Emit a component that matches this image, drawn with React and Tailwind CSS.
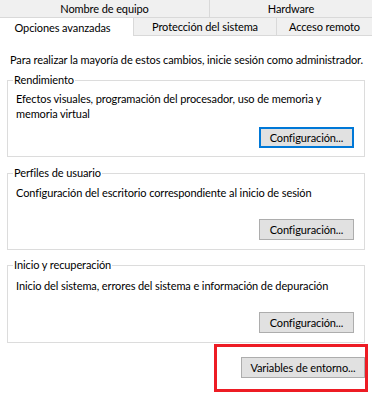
export default function App() {
  const font = { fontFamily: 'Lato, "Liberation Sans", Arial, sans-serif' };

  return (
    <div
      className="w-[372px] h-[395px] bg-white text-black text-[11px] leading-[15px] tracking-[-0.1px] overflow-hidden whitespace-nowrap"
      style={font}
    >
      {/* Tab strip */}
      <div className="flex h-[18px] bg-[#f0f0f0] border-b border-[#d9d9d9]">
        <div className="w-[210px] flex items-center justify-center border-r border-[#d9d9d9]">
          Nombre de equipo
        </div>
        <div className="flex-1 flex items-center justify-center">Hardware</div>
      </div>
      <div className="flex h-[18px]">
        <div className="w-[133px] flex items-center justify-center pr-[8px] bg-white">
          Opciones avanzadas
        </div>
        <div className="w-[143px] flex items-center justify-center bg-[#f0f0f0] border-l border-b border-[#d9d9d9]">
          Protección del sistema
        </div>
        <div className="flex-1 flex items-center justify-center bg-[#f0f0f0] border-l border-b border-[#d9d9d9]">
          Acceso remoto
        </div>
      </div>

      {/* Body */}
      <div className="pt-[16px]">
        <p className="pl-[10px]">
          Para realizar la mayoría de estos cambios, inicie sesión como administrador.
        </p>

        <fieldset className="mt-[5px] mx-[7px] border border-[#dcdcdc] px-[8px] pb-[8px]">
          <legend className="ml-[-3px] px-[1px] leading-[16px]">Rendimiento</legend>
          <p className="pt-[3px]">
            Efectos visuales, programación del procesador, uso de memoria y
            <br />
            memoria virtual
          </p>
          <div className="flex justify-end mt-[6px] pr-[2px]">
            <button className="w-[95px] h-[21px] bg-[#e1e1e1] border-2 border-[#0078d7] flex items-center justify-center">
              Configuración...
            </button>
          </div>
        </fieldset>

        <fieldset className="mt-[8px] mx-[7px] border border-[#dcdcdc] px-[8px] pb-[9px]">
          <legend className="ml-[-3px] px-[1px] leading-[16px]">Perfiles de usuario</legend>
          <p className="pt-[4px]">
            Configuración del escritorio correspondiente al inicio de sesión
          </p>
          <div className="flex justify-end mt-[19px] pr-[2px]">
            <button className="w-[95px] h-[21px] bg-[#e1e1e1] border border-[#adadad] flex items-center justify-center">
              Configuración...
            </button>
          </div>
        </fieldset>

        <fieldset className="mt-[7px] mx-[7px] border border-[#dcdcdc] px-[8px] pb-[9px]">
          <legend className="ml-[-3px] px-[1px] leading-[16px]">Inicio y recuperación</legend>
          <p className="pt-[5px]">
            Inicio del sistema, errores del sistema e información de depuración
          </p>
          <div className="flex justify-end mt-[19px] pr-[2px]">
            <button className="w-[95px] h-[21px] bg-[#e1e1e1] border border-[#adadad] flex items-center justify-center">
              Configuración...
            </button>
          </div>
        </fieldset>

        <div className="flex justify-end pr-[4px] mt-[1px]">
          <div className="w-[154px] h-[48px] border-[3px] border-[#ed1c24] flex justify-end pt-[10px]">
            <button className="w-[124px] h-[21px] bg-[#e1e1e1] border border-[#adadad] flex items-center justify-center">
              Variables de entorno...
            </button>
          </div>
        </div>
      </div>
    </div>
  );
}
